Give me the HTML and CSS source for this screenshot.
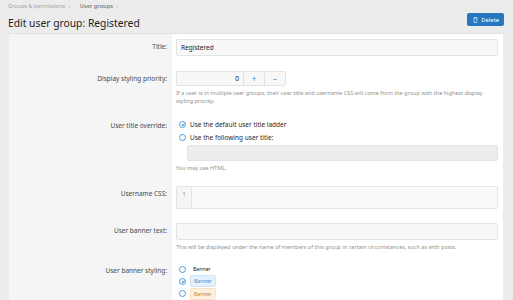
FILE: index.html
```html
<!DOCTYPE html>
<html lang="en">
<head>
    <meta charset="UTF-8">
    <meta name="viewport" content="width=device-width, initial-scale=1.0">
    <title>Edit user group: Registered</title>
    <link rel="stylesheet" href="styles.css">
</head>
<body>
    <div class="page-header">
        <div class="breadcrumbs">
            <span class="crumb">Groups &amp; permissions</span>
            <span class="sep">›</span>
            <span class="crumb crumb-strong">User groups</span>
            <span class="sep">›</span>
        </div>
        <div class="title-bar">
            <h1>Edit user group: Registered</h1>
            <button class="btn-delete" type="button">
                <svg class="btn-icon" viewBox="0 0 10 12" width="5" height="6">
                    <path d="M1 2h8M3.5 2V1h3v1M2 2l.5 9h5L8 2" fill="none" stroke="#fff" stroke-width="1.2"/>
                </svg>
                Delete
            </button>
        </div>
    </div>

    <!-- form block -->
    <div class="block">
        <div class="form-row row-title">
            <div class="row-label">Title:</div>
            <div class="row-input">
                <div class="input">Registered</div>
            </div>
        </div>

        <div class="form-row row-priority">
            <div class="row-label">Display styling priority:</div>
            <div class="row-input">
                <div class="number-box">
                    <div class="number-value">0</div>
                    <div class="number-btn">+</div>
                    <div class="number-btn">−</div>
                </div>
                <div class="hint">If a user is in multiple user groups, their user title and username CSS will come from the group with the highest display styling priority.</div>
            </div>
        </div>

        <div class="form-row">
            <div class="row-label">User title override:</div>
            <div class="row-input">
                <div class="choice"><span class="radio checked"></span>Use the default user title ladder</div>
                <div class="choice"><span class="radio"></span>Use the following user title:</div>
                <div class="input input-disabled"></div>
                <div class="hint">You may use HTML.</div>
            </div>
        </div>

        <div class="form-row">
            <div class="row-label">Username CSS:</div>
            <div class="row-input">
                <div class="code-box">
                    <div class="gutter">1</div>
                    <div class="code-area"></div>
                </div>
            </div>
        </div>

        <div class="form-row row-banner-text">
            <div class="row-label">User banner text:</div>
            <div class="row-input">
                <div class="input"></div>
                <div class="hint">This will be displayed under the name of members of this group in certain circumstances, such as with posts.</div>
            </div>
        </div>

        <div class="form-row">
            <div class="row-label">User banner styling:</div>
            <div class="row-input">
                <div class="banner-choice"><span class="radio"></span><span class="banner">Banner</span></div>
                <div class="banner-choice"><span class="radio checked"></span><span class="banner banner-blue">Banner</span></div>
                <div class="banner-choice"><span class="radio"></span><span class="banner banner-orange">Banner</span></div>
            </div>
        </div>
    </div>
</body>
</html>
```

FILE: styles.css
```css
body {
    margin: 0;
    background: #ececec;
    font-family: 'Noto Sans', 'Open Sans', sans-serif;
    color: #141414;
    overflow: hidden;
    height: 300px;
}

.page-header {
    padding: 2px 9px 0 8px;
}

.breadcrumbs {
    font-size: 5.5px;
    color: #a3a3a3;
    height: 10px;
    line-height: 9px;
}

.breadcrumbs .sep {
    margin: 0 8px 0 2px;
}

.breadcrumbs .crumb-strong {
    font-weight: bold;
    color: #8a8a8a;
}

.title-bar {
    display: flex;
    justify-content: space-between;
    align-items: center;
    height: 21px;
}

.title-bar h1 {
    margin: 0;
    font-size: 10.3px;
    font-weight: normal;
    color: #222;
}

.btn-delete {
    display: flex;
    align-items: center;
    gap: 3px;
    align-self: flex-start;
    height: 13px;
    padding: 0 5px 0 6px;
    margin-top: 1px;
    border: 0;
    border-radius: 2px;
    background: #2577c0;
    color: #fff;
    font-family: inherit;
    font-size: 5.8px;
}

.block {
    margin: 0 10px 0 9px;
    background: #fff;
    border-top: 1px solid #e2e2e2;
}

.form-row {
    display: grid;
    grid-template-columns: 163px 1fr;
}

.row-label {
    background: #f5f5f5;
    text-align: right;
    font-size: 6.5px;
    line-height: 10px;
    color: #4a4a4a;
    padding: 8px 5px 0 0;
}

.row-input {
    padding: 5px 5px 9px 4px;
}

.row-title .row-input {
    padding-bottom: 10px;
}

.row-priority .row-input {
    padding-bottom: 8px;
}

.row-banner-text .row-input {
    padding-bottom: 7px;
}

.input {
    height: 17px;
    box-sizing: border-box;
    border: 1px solid #e3e3e3;
    border-radius: 2px;
    background: #f8f8f8;
    font-size: 6.5px;
    line-height: 15px;
    padding: 0 4px;
    color: #222;
}

.input-disabled {
    height: 16px;
    background: #ededed;
    margin: 1px 0 0 11px;
}

.number-box {
    display: flex;
    width: 110px;
    height: 15px;
    box-sizing: border-box;
    border: 1px solid #e3e3e3;
    border-radius: 2px;
    background: #f8f8f8;
    font-size: 6.5px;
    line-height: 13px;
}

.number-value {
    flex: 1;
    text-align: right;
    padding-right: 4px;
}

.number-btn {
    width: 20px;
    border-left: 1px solid #e3e3e3;
    text-align: center;
    color: #2a86cf;
    font-size: 8px;
}

.hint {
    font-size: 5.5px;
    line-height: 8px;
    color: #929292;
    margin-top: 3px;
}

.choice {
    display: flex;
    align-items: center;
    height: 13px;
    font-size: 6.5px;
    color: #2a2a2a;
}

.radio {
    display: inline-block;
    box-sizing: border-box;
    width: 7px;
    height: 7px;
    border: 1px solid #4a9bd8;
    border-radius: 50%;
    margin: 0 4px 0 3px;
    position: relative;
    background: #fff;
}

.radio.checked::after {
    content: '';
    position: absolute;
    left: 1.6px;
    top: 0.6px;
    width: 1.4px;
    height: 2.4px;
    border: solid #4a9bd8;
    border-width: 0 0.7px 0.7px 0;
    transform: rotate(45deg);
}

.code-box {
    display: flex;
    height: 23px;
    box-sizing: border-box;
    border: 1px solid #e3e3e3;
    border-radius: 2px;
    background: #fafafa;
}

.gutter {
    width: 14px;
    border-right: 1px solid #e3e3e3;
    background: #f5f5f5;
    font-size: 5.5px;
    color: #888;
    text-align: center;
    padding-top: 3px;
}

.code-area {
    flex: 1;
}

.banner-choice {
    display: flex;
    align-items: center;
    height: 12.3px;
}

.banner {
    font-size: 5.2px;
    padding: 1px 3px;
    border-radius: 1.5px;
    color: #222;
}

.banner-blue {
    background: #e2f1fc;
    color: #4a8ec8;
    border: 0.5px solid #cfe5f7;
}

.banner-orange {
    background: #fdf0e0;
    color: #c78236;
    border: 0.5px solid #f7e0c6;
}
```
